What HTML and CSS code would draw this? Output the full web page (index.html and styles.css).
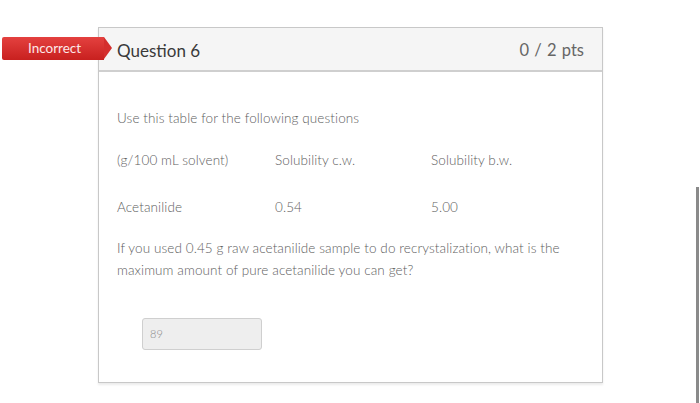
FILE: index.html
```html
<!DOCTYPE html>
<html>
<head>
<meta charset="utf-8">
<link rel="stylesheet" href="styles.css">
</head>
<body>
<div class="page">
  <div class="badge">Incorrect</div>
  <div class="card">
    <div class="card-head">
      <span class="q-title">Question 6</span>
      <span class="q-pts">0 / 2 pts</span>
    </div>
    <div class="card-body">
      <p class="intro">Use this table for the following questions</p>
      <div class="row">
        <span class="c1">(g/100 mL solvent)</span>
        <span class="c2">Solubility c.w.</span>
        <span class="c3">Solubility b.w.</span>
      </div>
      <div class="row row2">
        <span class="c1">Acetanilide</span>
        <span class="c2">0.54</span>
        <span class="c3">5.00</span>
      </div>
      <p class="question">If you used 0.45 g raw acetanilide sample to do recrystalization, what is the maximum amount of pure acetanilide you can get?</p>
      <div class="answer">89</div>
    </div>
  </div>
  <div class="scrollbar"></div>
</div>
</body>
</html>
```
FILE: styles.css
```css
html, body {
  margin: 0;
  padding: 0;
  background: #fff;
}
body {
  width: 700px;
  height: 403px;
  overflow: hidden;
  font-family: Lato, "Open Sans", sans-serif;
  color: #5e5e5e;
}
.page {
  position: relative;
  padding: 27px 0 0 98px;
  height: 376px;
}
.badge {
  position: absolute;
  left: 2px;
  top: 37px;
  width: 102px;
  height: 23px;
  background: linear-gradient(#e4413f, #c8201f);
  color: #fde8e8;
  font-size: 13.5px;
  line-height: 23px;
  padding-left: 26px;
  box-sizing: border-box;
  border-radius: 2px 0 0 2px;
}
.badge::after {
  content: "";
  position: absolute;
  right: -8px;
  top: 0;
  border-top: 11.5px solid transparent;
  border-bottom: 11.5px solid transparent;
  border-left: 8px solid #d42e2d;
}
.card {
  width: 503px;
  border: 1px solid #c8c8c8;
  box-shadow: 0 2px 2px rgba(0,0,0,0.08);
}
.card-head {
  height: 42px;
  background: #f5f5f5;
  border-bottom: 2px solid #cfcfcf;
  display: flex;
  align-items: center;
  justify-content: space-between;
  padding: 0 18px 0 18px;
}
.q-title {
  font-size: 17px;
  color: #3a3a3a;
  padding-top: 3px;
}
.q-pts {
  font-size: 16.5px;
  color: #666;
  padding-top: 1px;
  word-spacing: 1px;
}
.card-body {
  padding: 35px 18px 32px 18px;
  font-size: 13.5px;
  font-weight: 300;
  line-height: 22px;
  letter-spacing: 0.1px;
}
.intro {
  margin: 0 0 20px 0;
}
.row {
  display: flex;
}
.row2 {
  margin-top: 25px;
}
.c1 { width: 158px; }
.c2 { width: 156px; }
.question {
  margin: 19px 0 37px 0;
}
.answer {
  margin-left: 25px;
  height: 30px;
  border: 1px solid #cfcfcf;
  border-radius: 3px;
  background: #eeeeee;
  font-size: 11px;
  color: #888;
  line-height: 30px;
  padding-left: 7px;
  width: 111px;
}
.scrollbar {
  position: absolute;
  left: 696px;
  top: 187px;
  width: 3px;
  height: 216px;
  background: #8a8a8a;
}
```
